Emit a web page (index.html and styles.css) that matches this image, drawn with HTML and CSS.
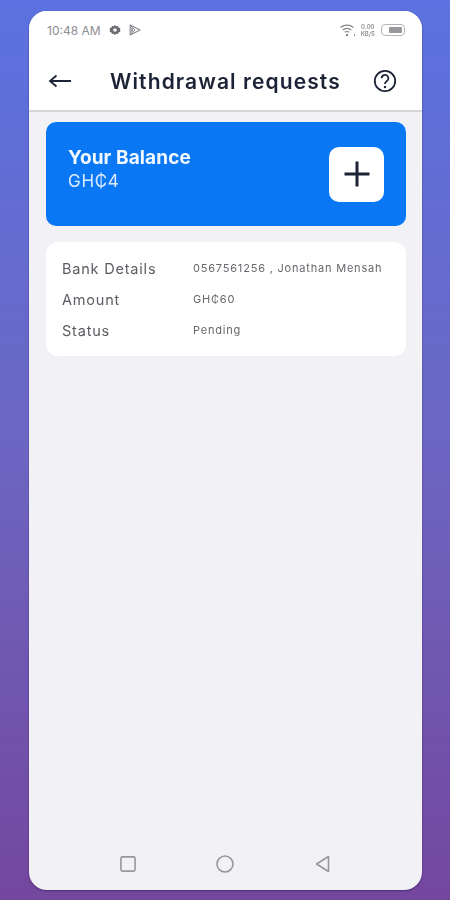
FILE: index.html
```html
<!DOCTYPE html>
<html>
<head>
  <meta charset="UTF-8">
  <title>Withdrawal requests</title>
  <link rel="stylesheet" href="styles.css">
</head>
<body>
  <div class="phone">
    <div class="top">
      <div class="status_bar">
        <div class="status_left">
          <span class="clock">10:48 AM</span>
          <svg class="status_icon" width="12" height="12" viewBox="0 0 12 12">
            <path d="M6 .8l1.100 1.400 1.800-.3.7 1.700 1.700.7L11.100 6l.2 1.700-1.700.7-.7 1.700-1.800-.3L6 11.200 4.900 9.800l-1.800.3-.7-1.700-1.700-.7L.9 6 .7 4.300l1.700-.7.7-1.700 1.800.3z" fill="#6d6d72"/>
            <circle cx="6" cy="6" r="1.800" fill="#fff"/>
          </svg>
          <svg class="status_icon" width="12" height="12" viewBox="0 0 12 12">
            <path d="M1.200 1v10L11 6z" fill="none" stroke="#8a8a8e" stroke-width="1.200" stroke-linejoin="round"/>
            <path d="M1.200 1L6 6l-4.800 5" fill="none" stroke="#8a8a8e" stroke-width="1"/>
            <rect x="1.200" y="3.500" width="3" height="5" fill="#a8a8ac"/>
          </svg>
        </div>
        <div class="status_right">
          <svg width="16" height="14" viewBox="0 0 16 14">
            <path d="M.6 4.500a10 10 0 0 1 12.800 0M2.700 7a7 7 0 0 1 8.600 0M4.700 9.300a4 4 0 0 1 4.600 0" fill="none" stroke="#85858a" stroke-width="1.200"/>
            <circle cx="7" cy="12" r="1.200" fill="#85858a"/>
            <rect x="14" y="11" width="1" height="2" fill="#a0a0a4"/>
          </svg>
          <span class="net_speed">0.00<br>KB/S</span>
          <span class="battery"><span class="battery_fill"></span></span>
        </div>
      </div>
      <div class="app_bar">
        <svg class="back_icon" width="24" height="16" viewBox="0 0 24 16">
          <path d="M2 8H23M8.500 2.500L2 8l6.500 5.500" fill="none" stroke="#1d2336" stroke-width="1.800"/>
        </svg>
        <h1 class="page_title">Withdrawal requests</h1>
        <svg class="help_icon" width="24" height="24" viewBox="0 0 24 24">
          <circle cx="12" cy="12" r="10.200" fill="none" stroke="#1d2336" stroke-width="1.800"/>
          <path d="M8.600 9.300a3.400 3.400 0 1 1 5.300 2.800c-1.200.8-1.900 1.500-1.900 2.900" fill="none" stroke="#1d2336" stroke-width="1.800"/>
          <circle cx="12" cy="18" r="1.200" fill="#1d2336"/>
        </svg>
      </div>
    </div>

    <div class="content">
      <div class="balance_card">
        <div class="balance_text">
          <div class="balance_label">Your Balance</div>
          <div class="balance_value">GH₵4</div>
        </div>
        <div class="add_btn">
          <svg width="28" height="28" viewBox="0 0 28 28">
            <path d="M14 1.500v25M1.500 14h25" fill="none" stroke="#1d2336" stroke-width="3"/>
          </svg>
        </div>
      </div>

      <div class="request_card">
        <div class="row">
          <span class="row_label">Bank Details</span>
          <span class="row_value">0567561256 , Jonathan Mensah</span>
        </div>
        <div class="row">
          <span class="row_label">Amount</span>
          <span class="row_value">GH₵60</span>
        </div>
        <div class="row">
          <span class="row_label">Status</span>
          <span class="row_value">Pending</span>
        </div>
      </div>
    </div>

    <div class="nav_bar">
      <svg width="18" height="18" viewBox="0 0 18 18">
        <rect x="1.900" y="1.900" width="14.200" height="14.200" rx="1.500" fill="none" stroke="#98989c" stroke-width="1.600"/>
      </svg>
      <svg width="20" height="20" viewBox="0 0 20 20">
        <circle cx="10" cy="10" r="8" fill="none" stroke="#98989c" stroke-width="1.600"/>
      </svg>
      <svg width="18" height="18" viewBox="0 0 18 18">
        <path d="M14.500 1.500v15L2.500 9z" fill="none" stroke="#98989c" stroke-width="1.600" stroke-linejoin="round"/>
      </svg>
    </div>
  </div>
</body>
</html>
```

FILE: styles.css
```css
html, body {
  margin: 0;
  height: 100%;
}
body {
  box-sizing: border-box;
  height: 900px;
  padding: 11px 28px 10px 29px;
  background: linear-gradient(#5b72e0, #6c66c2 50%, #74479e);
  font-family: Inter, "Noto Sans", sans-serif;
  overflow: hidden;
}
.phone {
  display: flex;
  flex-direction: column;
  height: 100%;
  background-color: #f1f1f6;
  border-radius: 18px;
  overflow: hidden;
  box-shadow: 0 1px 2px rgba(40,20,80,0.5);
  filter: blur(0.35px);
}

.top {
  background-color: white;
  border-bottom: 2px solid #d6d6da;
  height: 99px;
  flex: none;
}
.status_bar {
  display: flex;
  justify-content: space-between;
  align-items: center;
  height: 38px;
  padding: 0 17px 0 18px;
}
.status_left, .status_right {
  display: flex;
  align-items: center;
}
.status_left {
  gap: 8px;
}
.status_right {
  gap: 5px;
}
.clock {
  font-size: 12px;
  color: #8d8d92;
}
.net_speed {
  margin-right: 1px;
  font-size: 6px;
  line-height: 7px;
  font-weight: 600;
  color: #929296;
  text-align: center;
}
.battery {
  display: flex;
  justify-content: flex-end;
  box-sizing: border-box;
  width: 24px;
  height: 12px;
  padding: 2px;
  border: 1.500px solid #b5b5b9;
  border-radius: 4px;
}
.battery_fill {
  width: 13px;
  background-color: #98989c;
  border-radius: 1px;
}
.app_bar {
  display: flex;
  align-items: center;
  height: 61px;
  padding: 2px 25px 0 19px;
  box-sizing: border-box;
}
.back_icon {
  flex: none;
}
.page_title {
  flex: 1;
  margin: 2px 0 0 38px;
  font-size: 21px;
  font-weight: 600;
  letter-spacing: 1.100px;
  color: #1d2336;
  white-space: nowrap;
}
.help_icon {
  flex: none;
}

.content {
  flex: 1;
  padding: 10px 16px 0 17px;
}
.balance_card {
  display: flex;
  justify-content: space-between;
  align-items: center;
  height: 104px;
  padding: 0 22px;
  background-color: #0a78f5;
  border-radius: 10px;
  color: white;
}
.balance_text {
  padding-bottom: 9px;
}
.balance_label {
  font-size: 19px;
  font-weight: 700;
  letter-spacing: 0.100px;
  line-height: 24px;
  color: #f2f8ff;
}
.balance_value {
  font-size: 17px;
  letter-spacing: 0.700px;
  line-height: 23px;
  color: #dcecff;
}
.add_btn {
  display: flex;
  justify-content: center;
  align-items: center;
  width: 55px;
  height: 55px;
  background-color: white;
  border-radius: 10px;
}
.request_card {
  display: flex;
  flex-direction: column;
  gap: 9px;
  height: 114px;
  box-sizing: border-box;
  margin-top: 16px;
  padding: 16px 16px;
  background-color: white;
  border-radius: 12px;
}
.row {
  display: flex;
  align-items: flex-start;
  height: 22px;
}
.row_label {
  width: 131px;
  font-size: 14.500px;
  letter-spacing: 0.800px;
  line-height: 22px;
  color: #5c5c62;
}
.row_value {
  font-size: 11px;
  letter-spacing: 0.800px;
  line-height: 20px;
  color: #66666c;
  white-space: nowrap;
}

.nav_bar {
  display: flex;
  justify-content: center;
  align-items: center;
  gap: 78.500px;
  height: 52px;
  padding-right: 1px;
  flex: none;
}
```
